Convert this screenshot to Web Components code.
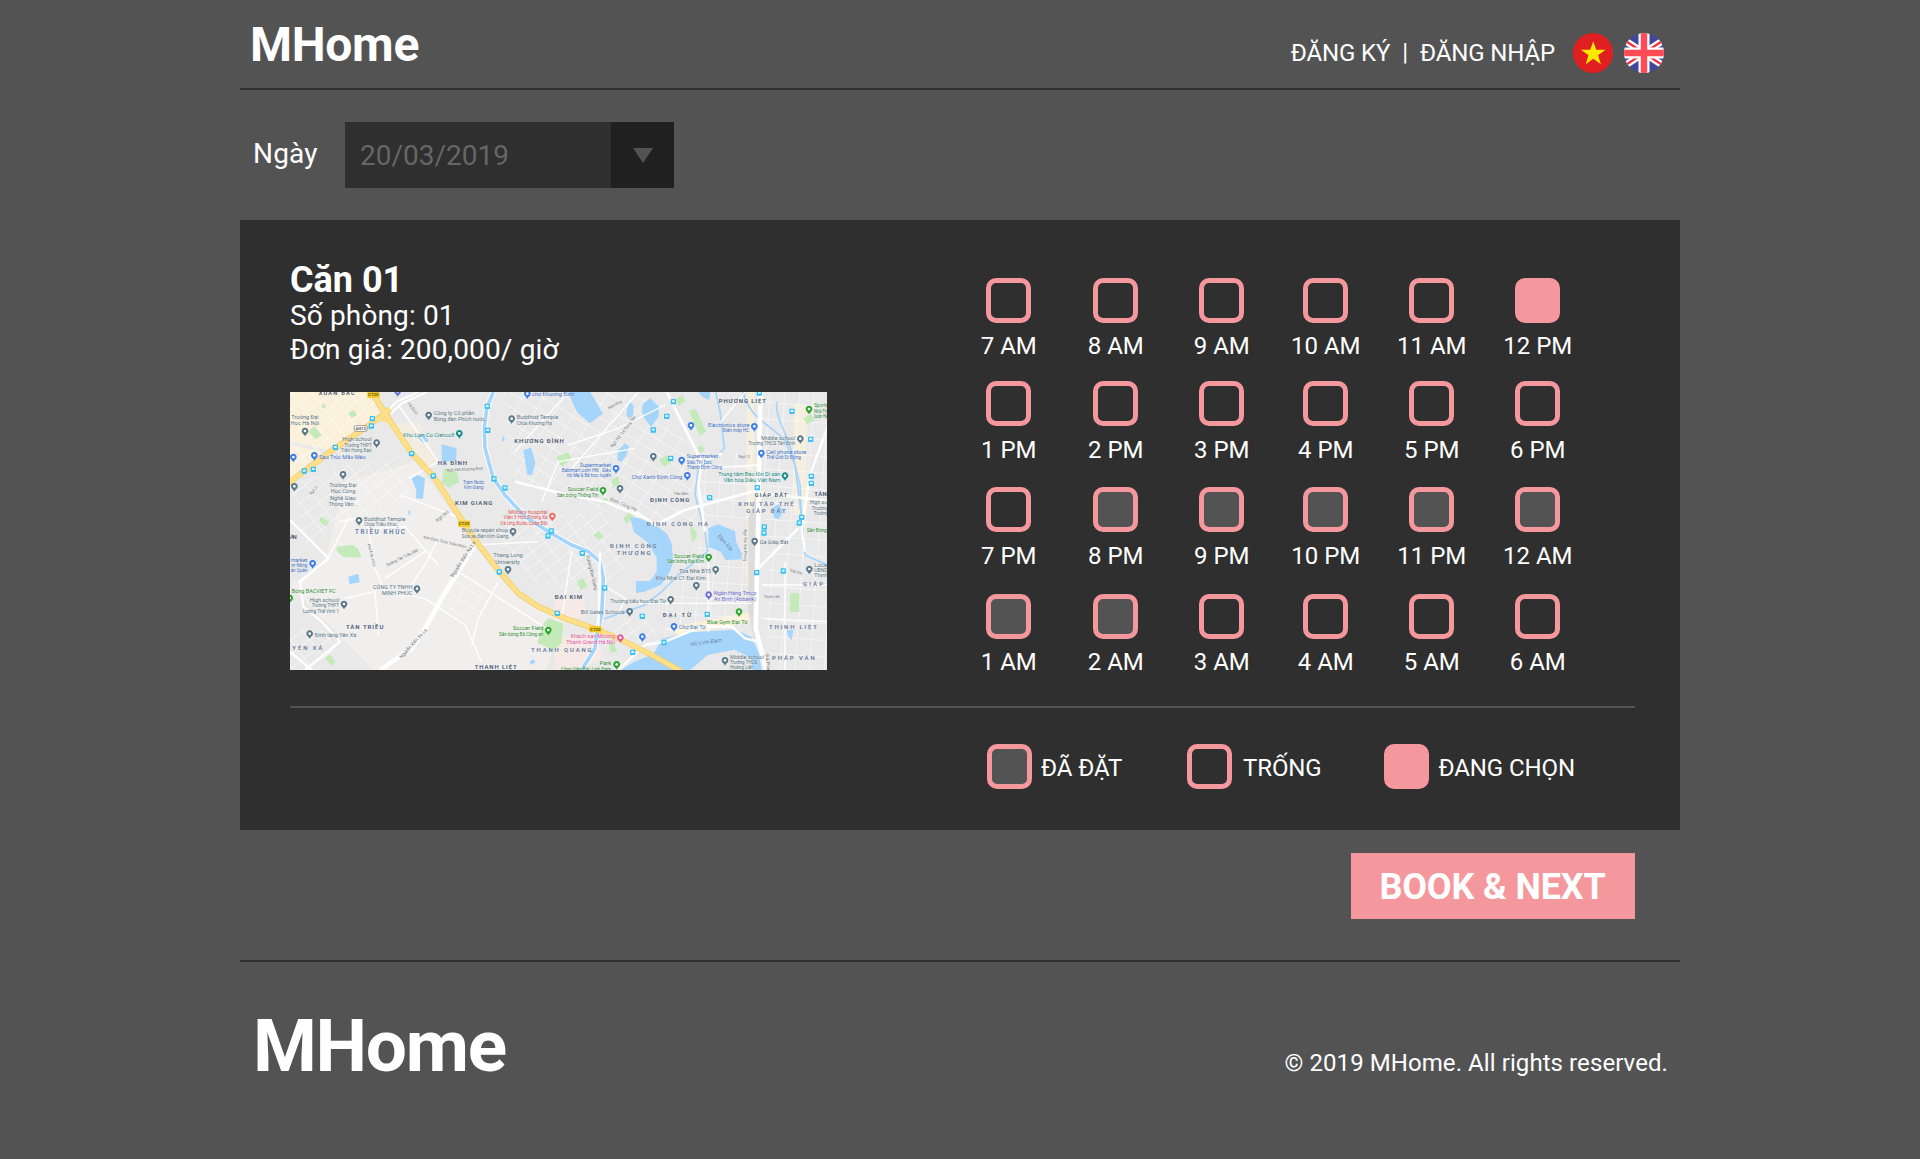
<!DOCTYPE html>
<html lang="vi">
<head>
<meta charset="utf-8">
<title>MHome</title>
<style>
html,body{margin:0;background:#535353}
body{font-family:Roboto,"Noto Sans",sans-serif;color:#fff;height:1159px;overflow:hidden}
</style>
</head>
<body>
<mh-page></mh-page>
<script>
const define=(name,html,setup)=>{
  const t=document.createElement('template');
  t.innerHTML=html;
  customElements.define(name,class extends HTMLElement{
    constructor(){
      super();
      this.attachShadow({mode:'open'}).append(t.content.cloneNode(true));
    }
    connectedCallback(){ if(setup) setup.call(this,this.shadowRoot); }
  });
};

define('mh-logo',`<style>
:host{display:block;font-weight:700;font-size:48px;line-height:56px;letter-spacing:-.3px;white-space:nowrap}
:host([size=large]){font-size:73px;line-height:86px;letter-spacing:-1.3px}
</style><slot></slot>`);

define('mh-flag',`<style>:host{display:block;width:40px;height:40px}svg{display:block}</style>
<svg width="40" height="40" viewBox="0 0 40 40"></svg>`,function(r){
  const s=r.querySelector('svg');
  s.innerHTML=this.getAttribute('code')==='vn'
  ?`<circle cx="20" cy="20" r="20" fill="#e02020"/><path d="M20.3 8.3l2.9 8.5h9.3l-7.4 5.4 2.8 9-7.6-5.4-7.6 5.4 2.8-9-7.6-5.4h9.3z" fill="#ffe800"/>`
  :`<clipPath id="c"><circle cx="20" cy="20" r="20"/></clipPath><g clip-path="url(#c)">
    <path d="M0 0h40v40H0z" fill="#41479b"/>
    <path d="M-6 3L46 37M-6 37L46 3" stroke="#fff" stroke-width="7"/>
    <path d="M-6 3L46 37M-6 37L46 3" stroke="#ff2b3c" stroke-width="2.2"/>
    <path d="M20 0v40M0 20h40" stroke="#fff" stroke-width="11"/>
    <path d="M20 0v40M0 20h40" stroke="#ff4b55" stroke-width="6.4"/></g>`;
});

define('mh-header',`<style>
:host{display:flex;justify-content:space-between;height:88px;border-bottom:2px solid #2f2f2f;padding:0 16px 0 10px}
mh-logo{margin-top:17px}
nav{display:flex;font-size:24px;line-height:28px}
span{margin-top:39px;letter-spacing:-.13px}
.bar{margin:38px 12px 0 12px}
mh-flag{margin:33px 0 0 18px}
mh-flag+mh-flag{margin-left:11px}
</style>
<mh-logo>MHome</mh-logo>
<nav><span>ĐĂNG KÝ</span><span class="bar">|</span><span>ĐĂNG NHẬP</span><mh-flag code="vn"></mh-flag><mh-flag code="uk"></mh-flag></nav>`);

define('mh-date-filter',`<style>
:host{display:flex;height:98px;padding:32px 0 0 13px;font-size:28px;line-height:32px}
label{width:92px;padding-top:16px;letter-spacing:.2px}
.field{display:flex;width:329px;height:66px;background:#2f2f2f;color:#666}
.value{flex:1;padding:18px 0 0 15px}
.drop{width:63px;display:flex;justify-content:center;background:#202020}
svg{display:block;margin-top:26px}
</style>
<label>Ngày</label>
<div class="field"><div class="value"><slot></slot></div><div class="drop"><svg width="20" height="15"><path d="M0 0h20L10 15z" fill="#535353"/></svg></div></div>`);

define('mh-box',`<style>
:host{display:block;box-sizing:border-box;width:45px;height:45px;border:5px solid #f5989d;border-radius:10px;flex:none}
:host([state=booked]){background:#535353}
:host([state=selected]){background:#f5989d}
</style>`);

define('mh-time-slot',`<style>
:host{display:flex;flex-direction:column;align-items:center;width:45px;font-size:24px;line-height:28px;white-space:nowrap}
span{margin-top:9px;padding-left:.6px}
:host([low]) span{margin-top:10px}
</style><mh-box></mh-box><span><slot></slot></span>`,function(r){
  r.querySelector('mh-box').setAttribute('state',this.getAttribute('state')||'free');
});

define('mh-schedule',`<style>
:host{display:grid;grid-template-columns:107px 106px 104px 106px 106px 45px;grid-template-rows:103px 106px 107px 83px}
</style>`,function(r){
  const booked=['8 PM','9 PM','10 PM','11 PM','12 AM','1 AM','2 AM'];
  const hours=['7 AM','8 AM','9 AM','10 AM','11 AM','12 PM','1 PM','2 PM','3 PM','4 PM','5 PM','6 PM','7 PM','8 PM','9 PM','10 PM','11 PM','12 AM','1 AM','2 AM','3 AM','4 AM','5 AM','6 AM'];
  hours.forEach((h,i)=>{
    const e=document.createElement('mh-time-slot');
    e.textContent=h;
    e.setAttribute('state',h==='12 PM'?'selected':booked.includes(h)?'booked':'free');
    if(i>5&&i<18) e.setAttribute('low','');
    r.append(e);
  });
});

define('mh-legend-item',`<style>
:host{display:flex;font-size:24px;line-height:28px;white-space:nowrap}
span{margin:10px 0 0 var(--gap,9px);letter-spacing:-.1px}
</style><mh-box></mh-box><span><slot></slot></span>`,function(r){
  r.querySelector('mh-box').setAttribute('state',this.getAttribute('state'));
});

define('mh-map',`<style>
:host{display:block;width:537px;height:278px;overflow:hidden}
svg{display:block;font-family:Roboto,"Noto Sans",sans-serif}
text{paint-order:stroke;stroke:#f4f4f4;stroke-width:2px;stroke-opacity:.4}
</style>
<svg width="537" height="278" viewBox="15 21 1611 834">
<defs>
<pattern id="g1" width="46" height="34" patternUnits="userSpaceOnUse" patternTransform="rotate(-38)"><path d="M0 0H46M0 0V34" stroke="#fff" stroke-width="4" fill="none"/></pattern>
<pattern id="g2" width="52" height="38" patternUnits="userSpaceOnUse" patternTransform="rotate(32)"><path d="M0 0H52M0 0V38" stroke="#fff" stroke-width="4" fill="none"/></pattern>
<pattern id="g3" width="44" height="50" patternUnits="userSpaceOnUse" patternTransform="rotate(4)"><path d="M0 0H44M0 0V50" stroke="#fff" stroke-width="4" fill="none"/></pattern>
</defs>
<path d="M0 0H1640V870H0z" fill="#e9e9e9"/>
<path d="M180 290L390 230 530 420 560 470 700 640 840 710 780 860H270L15 600 120 530z" fill="#f1efee"/>
<g fill="#fbf1da"><path d="M15 21H250L285 85 130 195 15 170z"/><path d="M15 180L110 200 15 280z"/><path d="M1385 21H1408V600H1385zM1525 60h40v330h-40z" opacity=".7"/><path d="M1140 730L1400 680 1405 710 1180 750z"/><path d="M310 120L400 110 460 230 430 250z" opacity=".5"/></g>
<path d="M810 750l120 10 30 60-90 35h-60zM810 640h90v60h-90z" fill="#f7e9e6"/>
<g opacity=".7"><path d="M15 21H270L290 90 15 270z" fill="url(#g1)"/><path d="M15 300L190 240 350 210 380 330 220 400 60 480z" fill="url(#g1)"/>
<path d="M650 21H1060L1240 200 1280 430 1050 400 840 350 690 290z" fill="url(#g2)"/><path d="M640 400L960 380 1020 560 900 620 760 600 640 480z" fill="url(#g1)"/>
<path d="M1150 560L1260 460H1410V740H1140z" fill="url(#g3)"/><path d="M1430 21H1626V855H1450z" fill="url(#g3)"/><path d="M1230 200H1400V400H1240z" fill="url(#g3)"/>
<path d="M500 570L620 640 590 720 450 660z" fill="url(#g2)"/><path d="M960 700H1100L1120 780 1000 760z" fill="url(#g1)"/><path d="M15 720L130 740 150 800 60 855H15z" fill="url(#g1)"/></g>
<g fill="#c5eab9"><path d="M190 85l15-10 12 15-18 10zM70 140l18-17 22 27-18 13zM478 250l38 12 6 30-30 16-22-14zM105 395l28 15-10 15-18-14zM155 485l50-5 15 12 10 26-55-2-20-18zM120 820l14-12 18 22-12 12zM108 60l10-4 5 12-10 2z"/>
<path d="M1170 45l22-16 10 18-22 16zM1212 78l20-6 32 68-20 12zM1238 186l14-6 6 18-14 6zM815 215l35-14 10 20-30 26zM980 285l18-12 8 20-22 18zM950 345l14-8 6 12-14 8zM1015 400l20-20 12 15-22 22zM1122 225l22-14 20 16-26 18zM925 450l15-12 15 15-12 12zM1215 420l20 20 0 20-15 10zM1555 100l24-12 10 20-24 8z"/>
<path d="M790 700l45 15-5 60-25 20-48-20 15-55zM1515 625h28v56h-28zM875 590l18-10 15 22-20 15zM970 775l15-5 12 30-20 4z"/></g>
<g fill="#a5d5fb"><path d="M470 178l45 12-2 36-42 6zM380 280l18-10 22 10-6 62-22-2 2-24zM395 155l20-8 16 20-14 8zM715 195l24-7 12 45-10 37-14 0zM190 575l30-9 4 26-30 6zM370 377h6v12h-6zM652 155h6v14h-6zM735 828l12-5 4 10-14 6z"/>
<path d="M848 21h68l38 65-40 29-38-34zM1026 74l8-22 12 10-2 30-12 8-8-8zM1070 80l4-24 22-16 26 25-2 32-22 28-18-22zM1000 195l20-20 12 10-8 26-14 20-14-6z"/><path d="M1240 21h36l-4 24-20-10z"/>
<path d="M1035 397l30 3 45 20 35 25 15 30 5 55-12 35-25 35-50 20-25 4v-36l42 0 20-28v-42l-26-45-42-32z"/>
<path d="M1270 430l30-12 25 10 25 10 4 35 16 30v20l-48 2-15-25-36-14z"/>
<path d="M1000 860l45-28 60-25 25-45 80-20 140-8 50 22 22 50 8 54h-25l-8-42-49-24-80 16-58 50z"/>
<path d="M1460 370l20-12 15 20-14 25-14-5zM1505 735l20 0-5 30-10-10z"/></g>
<g fill="none" stroke="#a5d5fb" stroke-width="5"><path d="M1292 21L1305 80 1318 190 1300 210 1240 250 1230 330 1260 440 1268 500 1180 570 1130 620 1080 660 945 705"/><path d="M1374 21C1400 110 1450 110 1502 170L1530 240 1550 400"/><path d="M1475 50C1470 110 1515 150 1530 240L1545 300 1550 400 1560 510 1626 540"/></g>
<path d="M625 21L605 70 598 130 600 190 625 280 660 330 720 395 790 440 860 480 910 500 945 530 955 580 950 690 935 750 930 790 890 855" fill="none" stroke="#fff" stroke-width="17"/>
<path d="M625 21L605 70 598 130 600 190 625 280 660 330 720 395 790 440 860 480 910 500 945 530 955 580 950 690 935 750 930 790 890 855" fill="none" stroke="#a5d5fb" stroke-width="11"/>
<path d="M1390 400L1415 330V760h-8L1390 680z" fill="#dcdcdc"/>
<g fill="none" stroke="#fff" stroke-linejoin="round">
<path d="M15 405L60 450 130 520 45 590 55 665 110 710 165 770 60 855M15 800L80 855" stroke-width="7"/>
<path d="M285 855L380 790 420 730 470 640 570 480" stroke-width="14"/>
<path d="M1426 21L1420 400 1416 560 1412 730 1430 800 1445 855" stroke-width="14"/>
<path d="M310 75L335 50 400 21M318 85L350 55 425 21" stroke-width="6"/>
<path d="M1145 21L1250 230M1260 440L1240 300 1250 235 1310 205M1000 350L1060 385 1110 420 1200 375 1400 320 1626 348" stroke-width="8"/>
<path d="M690 290L850 330 960 350 1080 400M1000 855L1080 780 1140 770 1250 725 1340 725 1380 760 1420 770M945 500L940 740M1420 550L1540 430M1626 130L1575 270 1550 430 1560 500" stroke-width="7"/>
<path d="M340 60L460 230 370 280M345 330L530 400M220 400L250 430 270 550 300 620 420 640 540 720 590 830M460 460L420 540 350 640M265 430L360 425 460 540M300 580L420 500M190 400L130 520M570 480L760 470M160 410L220 400M180 640L270 620 280 750M520 560L800 740M640 590L580 700 560 780M850 180L1000 130 1140 60M770 350L820 230 1050 190M850 21L690 200M1060 21L860 250M1430 600H1626M1430 700L1626 710M1500 530V855M1420 240L1250 250M1380 21L1300 120M860 500L830 700M955 600L1020 640 1000 690M1060 655H1400M1270 500V740" stroke-width="4"/>
</g>
<g fill="none" stroke="#f3ca5c" stroke-width="17"><path d="M260 21L300 85 380 205 445 273 540 420 570 465 643 560 700 625 760 665 840 700 930 732 1010 765 1110 815 1190 860M10 294L150 190 260 115 315 72"/></g>
<g fill="none" stroke="#ffe08a" stroke-width="13"><path d="M260 21L300 85 380 205 445 273 540 420 570 465 643 560 700 625 760 665 840 700 930 732 1010 765 1110 815 1190 860M10 294L150 190 260 115 315 72M280 100L320 110"/></g>
<g id="stops"></g><g id="pins"></g><g id="labels"></g>
</svg>`,function(r){
  const B='#3f72c4',G='#5a7888',N='#46566e',V='#2f8f35',T='#1a8c8c',R='#d9534f',S='#707070',P='#e754a6',I='#6a6fd0';
  const $=s=>r.querySelector(s);
  $('#stops').innerHTML=[[262,101],[259,123],[151,187],[380,206],[445,273],[58,258],[85,253],[607,64],[608,136],[627,282],[660,309],[799,438],[789,453],[643,561],[817,685],[892,505],[959,609],[1072,694],[1267,688],[1137,773],[1043,802],[1165,50],[1145,94],[1105,135],[1157,220],[1274,338],[1423,24],[1521,79],[1577,163],[1579,274],[1579,295],[1417,308],[1550,397],[1543,414],[1438,426],[1437,444],[1415,563],[1495,558]]
   .map(([x,y])=>`<rect x="${x-8}" y="${y-8}" width="16" height="16" rx="2" fill="#3cc1f2"/><path d="M${x-4} ${y-4}h8v6h-8z" fill="#e9f9ff"/>`).join('')
   +[[265,29],[537,416],[931,732]].map(([x,y])=>`<rect x="${x-18}" y="${y-9}" width="37" height="19" rx="3" fill="#f4cb2b"/><text x="${x}" y="${y+5}" font-size="13" font-weight="700" text-anchor="middle" fill="#6b5a10" style="stroke:none">CT20</text>`).join('')
   +`<rect x="208" y="122" width="38" height="17" rx="3" fill="#fff" stroke="#777" stroke-width="2"/><text x="227" y="135" font-size="12" font-weight="700" text-anchor="middle" fill="#555" style="stroke:none">AH13</text>`;
  $('#pins').innerHTML=[[60,140,G],[275,175,G],[431,92,G],[523,147,T],[680,103,G],[174,270,G],[222,408,G],[28,306,G],[88,213,'#3d7de8'],[25,218,'#3d7de8'],[338,21,I],[727,28,'#3d7de8'],[802,395,'#f06a6a'],[684,441,G],[83,537,'#3d7de8'],[396,613,G],[177,659,G],[74,748,G],[14,641,'#2aa52a'],[669,555,G],[790,737,'#2aa52a'],
   [1218,123,'#3d7de8'],[1408,126,'#3d7de8'],[1572,74,'#2aa52a'],[1546,163,G],[1429,206,'#3d7de8'],[1105,216,G],[1190,227,'#3d7de8'],[993,252,'#3d7de8'],[1207,273,'#3d7de8'],[954,318,'#2aa52a'],[1005,312,G],[1500,274,T],[1409,470,G],[1271,518,'#2aa52a'],[1292,555,G],[1234,603,G],[1157,645,G],[1034,681,G],[1271,631,I],[1362,682,'#2aa52a'],[1167,726,'#3d7de8'],[1072,757,'#3d7de8'],[1006,760,P],[995,840,'#2aa52a'],[1320,828,G],[1573,554,G]]
   .map(([x,y,c])=>`<path d="M${x} ${y+14}q-2-5-6-8a10 10 0 1 1 12 0q-4 3-6 8z" fill="${c}"/><circle cx="${x}" cy="${y-2}" r="4" fill="#fff"/>`).join('');
  // x, baseline y, drawn width, font size, colour, text, anchor, rotation
  const L=[[155,30,108,17,N,'XUÂN BẮC'],[60,101,82,17,G,'Trường Đại'],[60,120,85,17,G,'Học Hà Nội'],[260,167,88,18,G,'High school','end'],[260,185,82,14,G,'Trường THPT','end'],[260,200,92,14,G,'Trần Hưng Đạo','end'],[103,221,139,18,B,'Sáo Trúc Mão Mèo','start'],[174,305,82,17,G,'Trường Đại'],[174,325,74,17,G,'Học Công'],[174,344,78,17,G,'Nghệ Giao'],[174,363,86,17,G,'Thông Vận...'],[446,90,122,17,G,'Công ty Cổ phần','start'],[446,109,154,17,G,'Bóng đèn Phích nước','start'],[508,155,153,18,T,'Khu Lien Co Cienco8','end'],[502,240,88,18,N,'HẠ ĐÌNH'],[566,297,64,14,B,'Trạm Nước'],[566,311,58,14,B,'Kim Giang'],[566,361,112,18,N,'KIM GIANG'],[695,103,125,18,G,'Buddhist Temple','start'],[695,120,105,14,G,'Chùa Khương Hạ','start'],[762,174,148,18,N,'KHƯƠNG ĐÌNH'],[741,33,128,17,B,'chợ Khương Đình','start'],[788,387,118,17,R,'Military hospital','end'],[788,403,132,14,R,'Viện Y Học Phóng Xạ','end'],[788,419,142,14,R,'Và Ung Bướu Quân Đội','end'],[237,408,124,17,G,'Buddhist Temple','start'],[237,424,100,14,G,'Chùa Triều Khúc','start'],[285,447,150,19,'#6680a5','TRIỀU KHÚC'],[530,441,139,17,G,'Bicycle repair shop','start'],[530,459,140,14,G,'Sửa xe điện Kim Giang','start'],
   [25,462,20,18,N,'ÂN'],[67,530,50,17,B,'market','end'],[67,547,48,14,B,'m Nông','end'],[67,562,50,14,B,'ản Quán','end'],[20,623,132,18,V,'Bóng BACVIET FC','start'],[382,612,118,17,G,'CÔNG TY TNHH','end'],[382,631,92,17,G,'MINH PHÚC','end'],[162,651,88,18,G,'High school','end'],[162,667,82,14,G,'Trường THPT','end'],[162,683,108,14,G,'Lương Thế Vinh 1','end'],[239,731,112,18,N,'TÂN TRIỀU'],[89,757,125,17,G,'Đình làng Yên Xá','start'],[67,796,90,18,'#66799b','YÊN XÁ'],[669,517,88,17,G,'Thang Long'],[668,536,74,17,G,'University'],[775,736,91,18,V,'Soccer Field','end'],[775,753,133,14,V,'Sân bóng Bộ Công an','end'],[632,851,126,18,N,'THANH LIỆT'],[829,800,182,18,'#66799b','THANH QUANG'],[850,643,82,18,N,'ĐẠI KIM'],
   [1372,53,142,18,N,'PHƯƠNG LIỆT'],[1393,127,124,17,B,'Electronics store','end'],[1393,142,80,14,B,'Điện máy HC','end'],[1587,67,42,17,V,'Sports','start'],[1587,83,42,14,V,'Nhà Thi','start'],[1587,99,42,14,V,'Quận HM','start'],[1531,164,103,17,G,'Middle school','end'],[1531,180,141,14,G,'Trường THCS Tân Định','end'],[1444,206,120,17,B,'Cell phone store','start'],[1444,222,104,14,B,'Thế Giới Di Động','start'],[1205,220,95,17,B,'Supermarket','start'],[1205,236,76,14,B,'Siêu Thị Đức','start'],[1205,252,106,14,B,'Thành Định Công','start'],[978,245,94,17,B,'Supermarket','end'],[978,260,148,14,B,'Babimart.com HN · Siêu','end'],[978,276,132,14,B,'thị Mẹ & Bé trực tuyến','end'],[1192,281,152,17,B,'Chợ Xanh Định Công','end'],[940,319,92,18,V,'Soccer Field','end'],[940,336,124,14,V,'Sân bóng Thống Tín','end'],[1486,273,186,17,T,'Trung tâm Bảo tồn Di sản','end'],[1486,291,170,17,T,'Văn hóa Diều Việt Nam','end'],[1154,352,118,18,N,'ĐỊNH CÔNG'],[1177,422,184,18,'#66799b','ĐỊNH CÔNG HẠ'],[1458,336,98,17,N,'GIÁP BÁT'],[1443,364,166,18,'#66799b','KHU TẬP THỂ'],[1443,385,118,18,'#66799b','GIÁP BÁT'],[1588,334,60,18,N,'TÂN M','start'],[1574,358,60,17,G,'High sch','start'],[1580,374,50,14,G,'Trường','start'],[1586,390,44,14,G,'Trường','start'],[1565,441,60,14,V,'Sân Bóng','start'],
   [1045,490,140,18,'#66799b','ĐỊNH CÔNG'],[1046,511,102,18,'#66799b','THƯỢNG'],[1257,518,90,17,V,'Soccer Field','end'],[1257,535,110,14,V,'Sân bóng Đại Kim','end'],[1278,565,96,17,G,'Tòa Nhà B15','end'],[1262,584,150,17,G,'Khu Nhà C1 Đại Kim','end'],[1143,653,167,17,G,'Trường tiểu học Đại Từ','end'],[1019,687,132,17,G,'Bill Gates Schools','end'],[1286,630,128,17,I,'Ngân Hàng Tmcp','start'],[1286,648,127,17,I,'An Bình (Abbank)','start'],[1176,697,86,18,N,'ĐẠI TỪ'],[1327,717,122,18,V,'Blue Gym Đại Từ'],[1182,732,80,17,B,'Chợ Đại Từ','start'],[990,759,133,17,P,'Khách sạn Mường','end'],[990,777,146,17,P,'Thanh Grand Hà Nội','end'],[978,839,34,17,V,'Park','end'],[978,857,150,14,V,'Công Viên Bắc Linh Đàm','end'],[1524,732,144,18,'#66799b','THỊNH LIỆT'],[1525,824,128,18,'#66799b','PHÁP VÂN'],[1335,821,102,17,G,'Middle school','start'],[1335,838,82,14,G,'Trường THCS','start'],[1335,853,68,14,G,'Hoàng Liệt','start'],[1424,478,86,17,G,'Ga Giáp Bát','start'],[1584,603,60,18,'#66799b','GIÁP'],[1588,545,42,17,G,'Local','start'],[1588,561,40,14,G,'UBND','start'],[1588,577,40,14,G,'Thịnh','start'],
   [535,527,125,15,S,'Nguyễn Xiển Xa La','middle',-57],[385,780,115,15,S,'Nguyễn Xiển Xa La','middle',-48],[480,475,132,12,S,'Kim Đình Thôn Triều Khúc','middle',13],[352,522,105,13,S,'Đường Tân Triều Mới','middle',-26],[260,515,70,12,S,'Phố Triều Khúc','middle',75],[540,257,110,12,S,'Ngõ 460 Khương Đình','middle',-3],[383,75,42,13,S,'Hạ Đình','middle',54],[87,320,34,12,S,'Ngõ 71','middle',-42],[472,398,46,13,S,'Ngõ 300','middle',-38],[1015,144,115,13,S,'Ngõ 192 - Lê Trọng Tấn','middle',-53],[1015,363,86,14,S,'Định Công Hạ','middle',23],[990,63,46,12,S,'Nam Hồng','middle',-28],[920,567,105,14,S,'Đường Kim Giang','middle',76],[1380,485,95,12,S,'Ngõ 366 Giải Phóng','middle',90],[1378,218,34,12,S,'Ngõ 12','middle'],[1188,330,44,12,S,'Trần Điền','middle'],[1264,777,94,17,'#3a76b4','Hồ Linh Đàm','middle',-8],[1319,478,60,17,'#3a76b4','Đầm Đỗi','middle',48],[1460,638,48,12,S,'Thịnh Liệt','middle'],[1448,840,60,14,S,'Giải Phóng','middle',85],[1533,564,38,12,S,'Giáp Nhị','middle',16]];
  $('#labels').innerHTML=L.map(([x,y,w,f,c,t,a='middle',rot])=>`<text x="${x}" y="${y}" font-size="${f}" textLength="${w}" lengthAdjust="${c===N||c[1]==='6'?'spacing':'spacingAndGlyphs'}" fill="${c}" text-anchor="${a}" ${c===N||c==='#66799b'||c==='#6680a5'?'font-weight="600"':''} ${rot?`transform="rotate(${rot} ${x} ${y-4})"`:''}>${t.replace('&','&amp;')}</text>`).join('');
});

define('mh-room-card',`<style>
:host{display:block;height:610px;box-sizing:border-box;background:#2f2f2f;padding:0 45px 0 50px}
.top{display:flex;height:486px;border-bottom:2px solid #535353}
.info{width:696px;padding-top:39px;box-sizing:border-box}
h2{margin:0 0 -2px;font-size:36px;line-height:42px;font-weight:700}
p{margin:0;font-size:28px;line-height:34px;letter-spacing:.14px}
mh-map{margin-top:25px}
mh-schedule{margin-top:58px}
.legend{display:flex;padding:36px 0 0 697px}
.legend>*{flex:none}
.a{width:200px;--gap:9px}.b{width:197px;--gap:11px}.c{--gap:9.5px}
</style>
<div class="top"><div class="info"><h2>Căn 01</h2><p>Số phòng: 01</p><p>Đơn giá: 200,000/ giờ</p><mh-map></mh-map></div><mh-schedule></mh-schedule></div>
<div class="legend"><mh-legend-item class="a" state="booked">ĐÃ ĐẶT</mh-legend-item><mh-legend-item class="b" state="free">TRỐNG</mh-legend-item><mh-legend-item class="c" state="selected">ĐANG CHỌN</mh-legend-item></div>`);

define('mh-button',`<style>
:host{display:block}
button{display:block;box-sizing:border-box;width:284px;height:66px;border:0;margin:0;padding:2px 1px 0 0;background:#f5989d;color:#fff;font:700 36px/64px Roboto,"Noto Sans",sans-serif;letter-spacing:-.15px}
</style><button><slot></slot></button>`);

define('mh-footer',`<style>
:host{display:flex;justify-content:space-between;height:197px;border-top:2px solid #2f2f2f;padding:0 12px 0 13px;font-size:24px;line-height:28px}
mh-logo{margin-top:41px}
span{margin-top:87px;letter-spacing:.08px}
</style><mh-logo size="large">MHome</mh-logo><span>© 2019 MHome. All rights reserved.</span>`);

define('mh-page',`<style>
:host{display:block;width:1440px;margin:0 auto}
.actions{display:flex;justify-content:flex-end;height:107px;padding:23px 45px 0 0}
</style>
<mh-header></mh-header>
<mh-date-filter>20/03/2019</mh-date-filter>
<mh-room-card></mh-room-card>
<div class="actions"><mh-button>BOOK &amp; NEXT</mh-button></div>
<mh-footer></mh-footer>`);
</script>
</body>
</html>
